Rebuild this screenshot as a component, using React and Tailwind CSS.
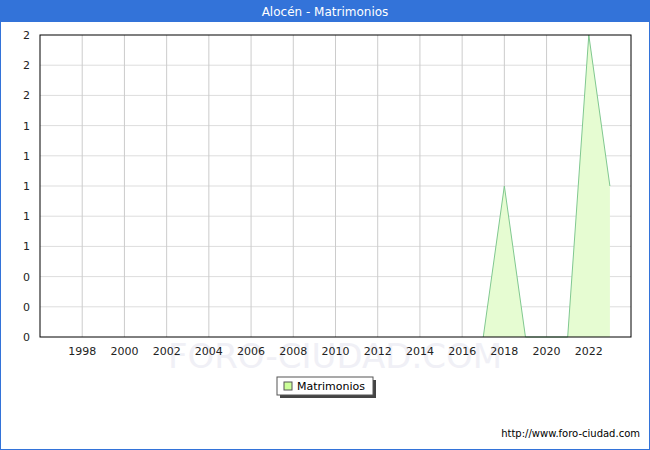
export default function App() {
  const X0 = 40, X1 = 631, Y0 = 35, Y1 = 337;
  const px = (yr) => X0 + ((yr - 1996) * (X1 - X0)) / 28;
  const py = (v) => Y1 - (v * (Y1 - Y0)) / 2;
  const years = [];
  for (let y = 1998; y <= 2022; y += 2) years.push(y);
  const labels = ['2', '2', '2', '1', '1', '1', '1', '1', '0', '0', '0'];
  const pts = [[2017, 0], [2018, 1], [2019, 0], [2021, 0], [2022, 2], [2023, 1]];
  const line = pts.map(([a, b]) => `${px(a)},${py(b)}`).join(' ');
  const area = `${px(2017)},${Y1} ${line} ${px(2023)},${Y1}`;
  return (
    <div className="w-[650px] h-[450px] bg-white flex flex-col border border-[#3373d9] relative" style={{ fontFamily: '"DejaVu Sans", sans-serif' }}>
      <div className="h-[21px] bg-[#3373d9] text-white text-[12px] flex items-center justify-center shrink-0">Alocén - Matrimonios</div>
      <svg width="650" height="428" viewBox="0 21 650 428" className="absolute left-[-1px] top-[20px]">
        <text x="335" y="368" textAnchor="middle" fontSize="34" fill="#f0f0f6" fontFamily="DejaVu Sans">FORO-CIUDAD.COM</text>
        {labels.map((l, i) => {
          const y = Y0 + (i * (Y1 - Y0)) / 10;
          return (
            <g key={i}>
              {i > 0 && i < 10 && <line x1={X0} x2={X1} y1={y} y2={y} stroke="#dddddd" />}
              <text x="30" y={y + 4} textAnchor="end" fontSize="11" fill="#222">{l}</text>
            </g>
          );
        })}
        {years.map((y) => (
          <g key={y}>
            <line x1={px(y)} x2={px(y)} y1={Y0} y2={Y1} stroke="#cccccc" />
            <text x={px(y)} y="355" textAnchor="middle" fontSize="11" fill="#222">{y}</text>
          </g>
        ))}
        <polygon points={area} fill="#e6fcd2" />
        <polyline points={line} fill="none" stroke="#80c890" strokeWidth="1" />
        <rect x={X0} y={Y0} width={X1 - X0} height={Y1 - Y0} fill="none" stroke="#000" strokeWidth="1" />
        <rect x="280" y="380" width="96" height="18" fill="#444" />
        <rect x="277" y="377" width="96" height="18" fill="#fff" stroke="#555" />
        <rect x="284" y="382" width="8" height="8" fill="#ccff99" stroke="#555" />
        <text x="297" y="390" fontSize="11" fill="#000">Matrimonios</text>
        <text x="640" y="437" textAnchor="end" fontSize="10" fill="#000">http://www.foro-ciudad.com</text>
      </svg>
    </div>
  );
}
